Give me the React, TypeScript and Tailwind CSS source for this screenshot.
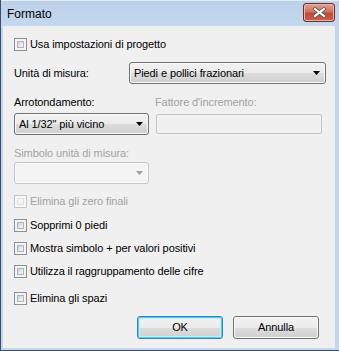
import React from "react";

function Check({ label, disabled }: { label: string; disabled?: boolean }) {
  return (
    <div className="flex items-center h-[13px]">
      <span
        className={
          "w-[13px] h-[13px] shrink-0 border p-[2px] " +
          (disabled ? "border-[#c5c5c5] bg-[#f7f7f7]" : "border-[#8e8f8f] bg-[#f4f4f4]")
        }
      >
        <span
          className={
            "block w-full h-full border " +
            (disabled
              ? "border-[#e0e0e0] bg-[#f4f4f4]"
              : "border-[#b0b3b7] bg-[linear-gradient(135deg,#cbcfd5,#eeeeee_70%,#f6f6f6)]")
          }
        />
      </span>
      <span className={"ml-[3px] leading-[13px] " + (disabled ? "text-[#a3a3a3]" : "text-black")}>{label}</span>
    </div>
  );
}

function Arrow({ color }: { color: string }) {
  return (
    <svg width="7" height="4" viewBox="0 0 7 4" className="shrink-0">
      <path d="M0 0H7L3.5 4Z" fill={color} />
    </svg>
  );
}

function Select({ text, w, disabled }: { text?: string; w: string; disabled?: boolean }) {
  return (
    <div
      className={
        "flex items-center h-[22px] rounded-[3px] border pl-[4px] pr-[5px] " +
        w +
        " " +
        (disabled
          ? "border-[#c4c7ca] bg-[#f4f4f4] shadow-[inset_0_0_0_1px_#fafafa]"
          : "border-[#707070] bg-[linear-gradient(#f2f2f2,#ebebeb_50%,#dddddd_50%,#cfcfcf)] shadow-[inset_0_0_0_1px_#fbfbfb]")
      }
    >
      <span className="flex-1 leading-[13px] whitespace-nowrap">{text}</span>
      <Arrow color={disabled ? "#a0a0a0" : "#000"} />
    </div>
  );
}

export default function App() {
  return (
    <div className="w-[339px] h-[351px] flex flex-col bg-[#c2d6ee] border-l border-b border-[#3b4f68] font-['Liberation_Sans',Arial,sans-serif] text-[11px] tracking-[-0.1px] text-black overflow-hidden">
      {/* Title bar */}
      <div className="h-[26px] shrink-0 flex items-center pl-[6px] pr-[4px] bg-[linear-gradient(#bcd1ea,#c4d8ef)] border-t border-[#e4eef9]">
        <span className="flex-1 text-[12px] tracking-normal leading-[14px] text-black">Formato</span>
        <div className="w-[32px] h-[19px] -mt-[3px] rounded-[3px] border border-[#6f2a24] bg-[linear-gradient(#e2a095,#d3735f_45%,#c04a38_55%,#c9604d)] shadow-[inset_0_0_0_1px_#eab5aa] flex items-center justify-center">
          <svg width="15" height="11" viewBox="0 0 15 11">
            <path d="M3 2L12 9M12 2L3 9" stroke="#5a5a5a" strokeWidth="3.6" strokeLinecap="square" />
            <path d="M3 2L12 9M12 2L3 9" stroke="#ffffff" strokeWidth="2" strokeLinecap="square" />
          </svg>
        </div>
      </div>

      {/* Client */}
      <div className="flex-1 ml-[2px] mr-[4px] mb-[2px] bg-[#f0f0f0] pl-[11px] pt-[12px] flex flex-col">
        <Check label="Usa impostazioni di progetto" />

        <div className="mt-[11px] flex items-center h-[22px]">
          <span className="w-[115px] leading-[13px]">Unità di misura:</span>
          <Select text="Piedi e pollici frazionari" w="w-[197px]" />
        </div>

        <div className="mt-[12px] flex items-center h-[13px] leading-[13px]">
          <span className="w-[141px]">Arrotondamento:</span>
          <span className="text-[#a3a3a3]">Fattore d'incremento:</span>
        </div>

        <div className="mt-[4px] flex items-center h-[22px]">
          <Select text={'Al 1/32" più vicino'} w="w-[135px]" />
          <div className="ml-[7px] w-[166px] h-[20px] rounded-[2px] border border-[#c3c6c9] bg-[#f0f0f0]" />
        </div>

        <div className="mt-[12px] h-[13px] leading-[13px] text-[#a3a3a3]">Simbolo unità di misura:</div>

        <div className="mt-[2px]">
          <Select w="w-[135px]" disabled />
        </div>

        <div className="mt-[11px]">
          <Check label="Elimina gli zero finali" disabled />
        </div>
        <div className="mt-[11px]">
          <Check label="Sopprimi 0 piedi" />
        </div>
        <div className="mt-[10px]">
          <Check label="Mostra simbolo + per valori positivi" />
        </div>
        <div className="mt-[10px]">
          <Check label="Utilizza il raggruppamento delle cifre" />
        </div>
        <div className="mt-[14px]">
          <Check label="Elimina gli spazi" />
        </div>

        <div className="mt-[11px] flex justify-end gap-[10px] pr-[16px]">
          <button className="w-[86px] h-[23px] rounded-[3px] border border-[#3c7fb1] bg-[linear-gradient(#f2f2f2,#ebebeb_50%,#dddddd_50%,#cfcfcf)] shadow-[inset_0_0_0_1px_#48d0f6,inset_0_0_0_2px_#c5eefb] text-[11px] text-black leading-[13px]">
            OK
          </button>
          <button className="w-[86px] h-[23px] rounded-[3px] border border-[#707070] bg-[linear-gradient(#f2f2f2,#ebebeb_50%,#dddddd_50%,#cfcfcf)] shadow-[inset_0_0_0_1px_#fbfbfb] text-[11px] text-black leading-[13px]">
            Annulla
          </button>
        </div>
      </div>
    </div>
  );
}
